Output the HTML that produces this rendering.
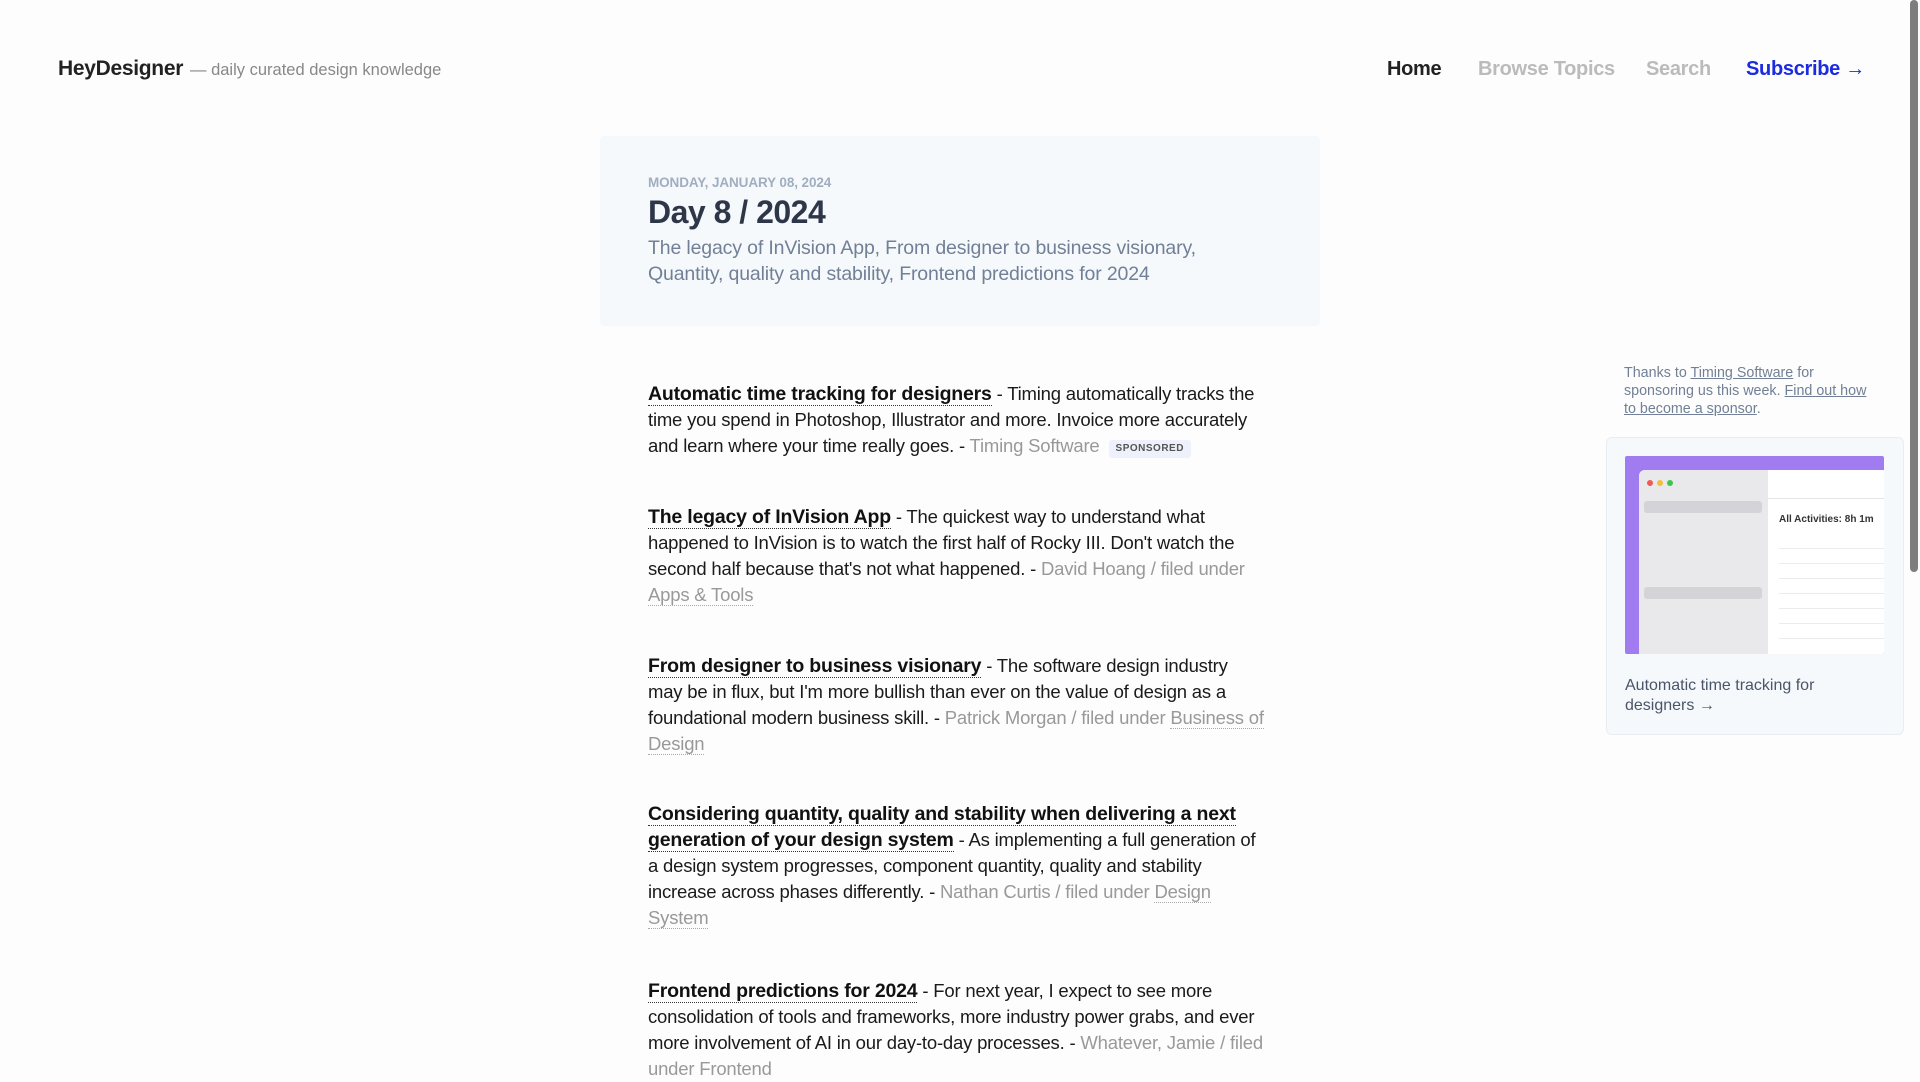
<!DOCTYPE html>
<html><head><meta charset="utf-8"><style>
*{margin:0;padding:0;box-sizing:border-box}
body{width:1920px;height:1080px;overflow:hidden;background:#fdfdfd;font-family:"Liberation Sans",sans-serif;position:relative}
.abs{position:absolute;white-space:nowrap}
.logo{left:58px;top:57px;font-size:21px;font-weight:bold;color:#222;letter-spacing:-0.3px}
.tag{left:190px;top:61px;font-size:16.5px;color:#888}
.nav{top:58px;font-size:20px;font-weight:bold;letter-spacing:-0.3px}
.card{left:600px;top:136px;width:720px;height:190px;background:#f6f9fc;border-radius:4px}
.date{left:648px;top:175px;font-size:13.5px;color:#a0aec0;font-weight:bold;letter-spacing:-0.1px}
.h1{left:648px;top:194px;font-size:32px;font-weight:bold;color:#2d3748;letter-spacing:-0.5px}
.sub{left:648px;top:235px;font-size:19.5px;line-height:26px;color:#718096;letter-spacing:-0.15px}
.art{left:648px;font-size:18.5px;line-height:26px;color:#1a1a1a;letter-spacing:-0.2px}
.art b{color:#111;font-size:19.5px;border-bottom:1.5px dotted #333;letter-spacing:-0.2px}
.g{color:#999}
.u{border-bottom:1px dotted #aaa}
.sp{display:inline-block;background:#eef0fb;color:#555;font-size:10px;font-weight:bold;line-height:12px;padding:3px 7px;border-radius:3px;margin-left:9px;vertical-align:1px;letter-spacing:0.5px}
.side{left:1624px;top:364px;font-size:14.3px;line-height:18px;color:#718096;letter-spacing:0}
.side a{color:#718096;text-decoration:underline}
.box{left:1606px;top:437px;width:298px;height:298px;background:#f6f9fc;border:1px solid #e8edf3;border-radius:6px}
.img{left:1625px;top:456px;width:259px;height:198px;background:#a17cf0;overflow:hidden;border-radius:2px}
.cap{left:1625px;top:676px;font-size:16px;line-height:20px;color:#4a5568}
.sb{left:1910px;top:0;width:8px;height:572px;background:#7d7d7d;border-radius:4px}
</style></head><body>
<div class="abs logo">HeyDesigner</div>
<div class="abs tag">— daily curated design knowledge</div>
<div class="abs nav" style="left:1387px;color:#222">Home</div>
<div class="abs nav" style="left:1478px;color:#bbb">Browse Topics</div>
<div class="abs nav" style="left:1646px;color:#bbb">Search</div>
<div class="abs nav" style="left:1746px;color:#1a2be0">Subscribe →</div>

<div class="abs card"></div>
<div class="abs date">MONDAY, JANUARY 08, 2024</div>
<div class="abs h1">Day 8 / 2024</div>
<div class="abs sub">The legacy of InVision App, From designer to business visionary,<br>Quantity, quality and stability, Frontend predictions for 2024</div>

<div class="abs art" style="top:381px"><b>Automatic time tracking for designers</b> - Timing automatically tracks the<br>time you spend in Photoshop, Illustrator and more. Invoice more accurately<br>and learn where your time really goes. - <span class="g">Timing Software</span><span class="sp">SPONSORED</span></div>

<div class="abs art" style="top:504px"><b>The legacy of InVision App</b> - The quickest way to understand what<br>happened to InVision is to watch the first half of Rocky III. Don't watch the<br>second half because that's not what happened. - <span class="g">David Hoang / filed under</span><br><span class="g u">Apps &amp; Tools</span></div>

<div class="abs art" style="top:653px"><b>From designer to business visionary</b> - The software design industry<br>may be in flux, but I'm more bullish than ever on the value of design as a<br>foundational modern business skill. - <span class="g">Patrick Morgan / filed under <span class="u">Business of</span></span><br><span class="g u">Design</span></div>

<div class="abs art" style="top:801px"><b>Considering quantity, quality and stability when delivering a next</b><br><b>generation of your design system</b> - As implementing a full generation of<br>a design system progresses, component quantity, quality and stability<br>increase across phases differently. - <span class="g">Nathan Curtis / filed under <span class="u">Design</span></span><br><span class="g u">System</span></div>

<div class="abs art" style="top:978px"><b>Frontend predictions for 2024</b> - For next year, I expect to see more<br>consolidation of tools and frameworks, more industry power grabs, and ever<br>more involvement of AI in our day-to-day processes. - <span class="g">Whatever, Jamie / filed</span><br><span class="g">under Frontend</span></div>

<div class="abs side">Thanks to <a>Timing Software</a> for<br>sponsoring us this week. <a>Find out how</a><br><a>to become a sponsor</a>.</div>
<div class="abs box"></div>
<div class="abs img">
 <div style="position:absolute;left:14px;top:14px;width:250px;height:200px;background:#fff;border-radius:6px;overflow:hidden">
  <div style="position:absolute;left:0;top:0;width:129px;height:200px;background:#e9e9ec"></div>
  <div style="position:absolute;left:8px;top:10px;width:6px;height:6px;border-radius:3px;background:#f05a55"></div>
  <div style="position:absolute;left:18px;top:10px;width:6px;height:6px;border-radius:3px;background:#f4bd3a"></div>
  <div style="position:absolute;left:28px;top:10px;width:6px;height:6px;border-radius:3px;background:#3ec54a"></div>
  <div style="position:absolute;left:5px;top:31px;width:118px;height:12px;background:#d4d4d8;border-radius:3px"></div>
  <div style="position:absolute;left:5px;top:117px;width:118px;height:12px;background:#d4d4d8;border-radius:3px"></div>
  <div style="position:absolute;left:140px;top:44px;font-size:10px;color:#333;font-weight:bold;white-space:nowrap">All Activities: 8h 1m</div>
  <div style="position:absolute;left:129px;top:28px;width:121px;height:1px;background:#e4e4e4"></div>
  <div style="position:absolute;left:140px;top:64px;width:110px;height:110px;background:repeating-linear-gradient(#fff 0 14px,#ececec 14px 15px)"></div>
 </div>
</div>
<div class="abs cap">Automatic time tracking for<br>designers →</div>
<div class="abs sb"></div>
</body></html>
